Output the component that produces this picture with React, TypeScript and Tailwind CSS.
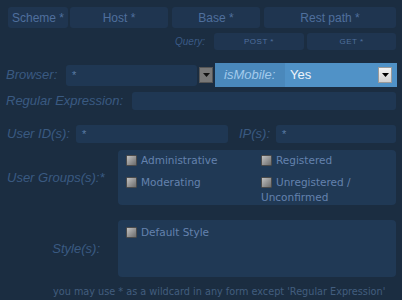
import React from "react";

const sans = "font-['Liberation_Sans',Arial,sans-serif]";
const deja = "font-['DejaVu_Sans',Verdana,sans-serif]";

const TopButton = ({ label, w }: { label: string; w: string }) => (
  <div
    className={`${w} h-[21px] rounded-[3px] bg-[#1f3550] text-[#4f6f9d] text-[12px] ${sans} flex items-center justify-center`}
  >
    {label}
  </div>
);

const SmallButton = ({ label, w }: { label: string; w: string }) => (
  <div
    className={`${w} h-[17px] rounded-[3px] bg-[#1f3550] text-[#4f6f9d] text-[8px] tracking-[0.5px] ${sans} flex items-center justify-center`}
  >
    {label}
  </div>
);

const Label = ({ children, className = "" }: { children: React.ReactNode; className?: string }) => (
  <span className={`italic text-[13px] text-[#3a5a81] ${sans} ${className}`}>{children}</span>
);

const Input = ({ className = "", value = "" }: { className?: string; value?: string }) => (
  <div
    className={`rounded-[3px] bg-[#1f3753] text-[#5a7ba4] text-[11px] ${sans} flex items-center pl-[6px] ${className}`}
  >
    {value}
  </div>
);

const Box = () => (
  <span className="inline-block align-[-2px] mr-[4px] w-[11px] h-[11px] border border-[#4b4b4b] bg-gradient-to-br from-[#c2c2c2] to-[#6c6c6c] rounded-[1px]" />
);

const Check = ({ label, className = "" }: { label: string; className?: string }) => (
  <div className={`text-[10.5px] leading-[15px] text-[#6482ae] ${deja} ${className}`}>
    <Box />
    {label}
  </div>
);

export default function App() {
  return (
    <div className="w-[402px] h-[300px] bg-[#1b2d41] overflow-hidden">
      {/* top buttons */}
      <div className="flex pt-[7px] pl-[8px]">
        <TopButton label="Scheme *" w="w-[60px]" />
        <div className="w-[2px]" />
        <TopButton label="Host *" w="w-[98px]" />
        <div className="w-[4px]" />
        <TopButton label="Base *" w="w-[88px]" />
        <div className="w-[4px]" />
        <TopButton label="Rest path *" w="w-[132px]" />
      </div>

      <div className="flex items-center mt-[5px] pl-[175px]">
        <span className={`italic text-[10px] text-[#3a5a85] ${sans} w-[39px]`}>Query:</span>
        <SmallButton label="POST *" w="w-[90px]" />
        <div className="w-[3px]" />
        <SmallButton label="GET *" w="w-[89px]" />
      </div>

      {/* browser row */}
      <div className="flex items-center mt-[13px] h-[24px]">
        <Label className="pl-[6px] w-[66px]">Browser:</Label>
        <Input className="w-[131px] h-[21px]" value="*" />
        <div className="ml-[2px] w-[14px] h-[16px] bg-[#787878] border border-[#555] flex items-center justify-center">
          <svg width="7" height="4" viewBox="0 0 7 4">
            <path d="M0 0h7L3.5 4z" fill="#111" />
          </svg>
        </div>
        <div className="ml-[2px] w-[182px] h-[24px] bg-[#4a88bb] flex items-center">
          <span className={`italic text-[13px] text-[#a3cbec] ${sans} pl-[9px] w-[70px]`}>isMobile:</span>
          <div className="flex-1 h-full bg-[#5092c7] flex items-center pl-[5px] pr-[5px]">
            <span className={`flex-1 text-[13px] text-[#eef4fa] ${sans}`}>Yes</span>
            <div className="w-[14px] h-[16px] bg-gradient-to-b from-[#f4f4f4] to-[#d2d2d2] border border-[#9a9a9a] flex items-center justify-center">
              <svg width="7" height="4" viewBox="0 0 7 4">
                <path d="M0 0h7L3.5 4z" fill="#000" />
              </svg>
            </div>
          </div>
        </div>
      </div>

      {/* regular expression */}
      <div className="flex items-center mt-[5px] h-[18px]">
        <Label className="pl-[6px] w-[132px]">Regular Expression:</Label>
        <Input className="w-[264px] h-[18px]" />
      </div>

      {/* user ids / ips */}
      <div className="flex items-center mt-[15px] h-[18px]">
        <Label className="pl-[7px] w-[76px]">User ID(s):</Label>
        <Input className="w-[152px] h-[18px]" value="*" />
        <Label className="pl-[11px] w-[48px]">IP(s):</Label>
        <Input className="w-[120px] h-[18px]" value="*" />
      </div>

      {/* user groups */}
      <div className="flex items-center mt-[7px]">
        <Label className="pl-[7px] w-[118px]">User Groups(s):*</Label>
        <div className="w-[278px] h-[55px] rounded-[4px] bg-[#203955] pl-[8px] pt-[3px] grid grid-cols-[135px_1fr] gap-y-[7px] content-start">
          <Check label="Administrative" />
          <Check label="Registered" />
          <Check label="Moderating" />
          <Check label="Unregistered / Unconfirmed" className="w-[105px]" />
        </div>
      </div>

      {/* styles */}
      <div className="flex items-center mt-[15px]">
        <Label className="w-[118px] text-right pr-[18px]">Style(s):</Label>
        <div className="w-[278px] h-[57px] rounded-[4px] bg-[#203955] pl-[8px] pt-[5px] self-start">
          <Check label="Default Style" />
        </div>
      </div>

      <div className={`mt-[8px] pl-[53px] text-[9.7px] text-[#425d7e] ${deja}`}>
        you may use * as a wildcard in any form except 'Regular Expression'
      </div>
    </div>
  );
}
